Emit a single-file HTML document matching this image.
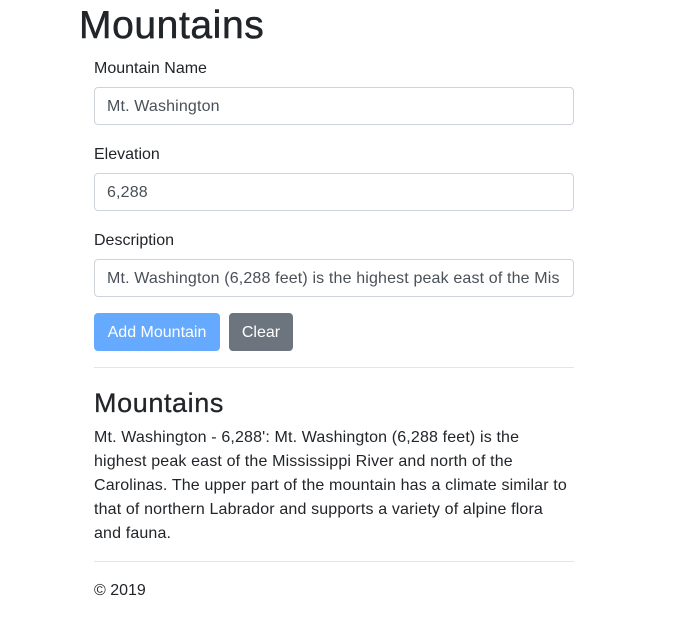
<!DOCTYPE html>
<html><head><style>
body{margin:0;background:#fff;color:#212529;font-family:"Liberation Sans",sans-serif;font-size:16px;width:696px;height:642px;overflow:hidden;position:relative}
.a{position:absolute}
h1{position:absolute;left:79px;top:3px;margin:0;font-size:39px;font-weight:normal;line-height:46px;letter-spacing:0.6px;-webkit-text-stroke:0.5px #212529}
label{position:absolute;left:94px;font-size:16px}
.in{position:absolute;left:94px;height:36px;border:1px solid #ced4da;border-radius:4px;font-size:16px;line-height:38px;padding-left:12px;box-sizing:content-box;width:466px;color:#495057;white-space:nowrap;overflow:hidden;letter-spacing:0.15px}
.btn{position:absolute;top:313px;height:38px;line-height:40px;color:#fff;border-radius:4px;font-size:16px;text-align:center}
hr{position:absolute;left:94px;width:480px;margin:0;border:0;border-top:1px solid #e5e5e5}
</style></head><body>
<h1>Mountains</h1>
<label style="top:60px">Mountain Name</label>
<div class="in" style="top:87px">Mt. Washington</div>
<label style="top:146px">Elevation</label>
<div class="in" style="top:173px">6,288</div>
<label style="top:232px">Description</label>
<div class="in" style="top:259px">Mt. Washington (6,288 feet) is the highest peak east of the Mis</div>
<div class="btn" style="left:94px;width:126px;background:#66aaff">Add Mountain</div>
<div class="btn" style="left:229px;width:64px;background:#6c757d">Clear</div>
<hr style="top:367px">
<div class="a" style="left:94px;top:387px;font-size:27px;line-height:32px;letter-spacing:0.6px;-webkit-text-stroke:0.3px #212529">Mountains</div>
<div class="a" style="left:94px;top:426px;width:500px;line-height:24px;white-space:nowrap;letter-spacing:0.15px">Mt. Washington - 6,288': Mt. Washington (6,288 feet) is the<br>highest peak east of the Mississippi River and north of the<br>Carolinas. The upper part of the mountain has a climate similar to<br>that of northern Labrador and supports a variety of alpine flora<br>and fauna.</div>
<hr style="top:561px">
<div class="a" style="left:94px;top:582px">© 2019</div>
</body></html>
